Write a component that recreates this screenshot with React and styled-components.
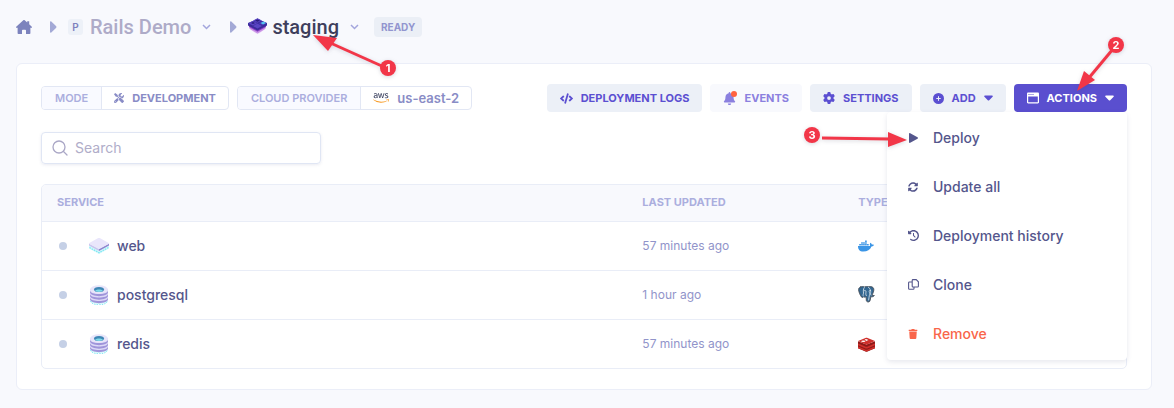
import React from "react";
import styled, { createGlobalStyle, css } from "styled-components";
import { FaAws, FaBell, FaCode, FaDocker, FaSyncAlt, FaTools, FaTrash } from "react-icons/fa";
import { FaCirclePlus, FaClockRotateLeft, FaGear } from "react-icons/fa6";

const GlobalStyle = createGlobalStyle`
  * { box-sizing: border-box; }
  body {
    margin: 0;
    min-height: 100vh;
    background: #f8f9fd;
    font-family: Inter, "Liberation Sans", sans-serif;
    font-size: 14px;
    line-height: 20px;
    color: #54568c;
  }
  button, input { font: inherit; margin: 0; }
`;

const Page = styled.main`
  padding: 12px 22px 18px 16px;
`;

const Breadcrumb = styled.nav`
  display: flex;
  align-items: center;
  height: 30px;
`;

const HomeLink = styled.a`
  display: flex;
  color: #7c83bd;
  margin-right: 17px;
  svg { display: block; }
`;

const Separator = styled.svg`
  display: block;
  width: 8px;
  height: 12px;
  margin-right: 11px;
  fill: #a3a9d6;
`;

const Initial = styled.span`
  display: grid;
  place-items: center;
  width: 15px;
  height: 16px;
  border-radius: 3px;
  background: #edf1f8;
  color: #7d81bd;
  font-size: 10px;
  line-height: 16px;
  font-weight: 600;
  margin-right: 7px;
`;

const Crumb = styled.a`
  font-family: Roboto, "Liberation Sans", sans-serif;
  font-size: 20px;
  line-height: 28px;
  font-weight: 500;
  text-decoration: none;
  color: ${(p) => (p.$current ? "#3e3f5c" : "#aeabc8")};
`;

const Environment = styled.div`
  display: flex;
  align-items: center;
  gap: 5px;
`;

const CrumbToggle = styled.button`
  display: flex;
  padding: 0;
  border: 0;
  background: none;
  margin: 0 ${(p) => p.$gap}px 0 11px;
  color: #a3a6dd;
`;

const Status = styled.span`
  padding: 0 7px;
  border-radius: 4px;
  background: #ebeff6;
  color: #9295cf;
  font-size: 10px;
  font-weight: 700;
  line-height: 20px;
`;

const Panel = styled.section`
  margin-top: 21px;
  padding: 20px 24px;
  border: 1px solid #ebeef8;
  border-radius: 6px;
  background: #fff;
`;

const Toolbar = styled.div`
  display: flex;
  align-items: center;
  justify-content: space-between;
`;

const Group = styled.div`
  display: flex;
  gap: 8px;
`;

const Tag = styled.div`
  display: flex;
  height: 24px;
  border: 1px solid #e2e7f4;
  border-radius: 4px;
  line-height: 22px;
  overflow: hidden;
`;

const TagLabel = styled.span`
  padding: 0 13px;
  background: #f9faff;
  border-right: 1px solid #e2e7f4;
  color: #abaede;
  font-size: 11px;
  font-weight: 600;
`;

const TagValue = styled.span`
  display: flex;
  align-items: center;
  gap: 8px;
  padding: 0 12px;
  color: #898cc6;
  font-size: ${(p) => (p.$large ? 13 : 11)}px;
  font-weight: ${(p) => (p.$large ? 600 : 700)};
`;

const AwsLogo = styled(FaAws)`
  path { fill: url(#aws-colors); }
`;

const buttonTone = {
  soft: css`background: #ecf0f7; color: #5b4fd1;`,
  faded: css`background: #f8f9fd; color: #8b80df;`,
  primary: css`background: #5a4fcf; color: #fff;`,
};

const Button = styled.button`
  display: flex;
  align-items: center;
  gap: 8px;
  height: 28px;
  padding: 0 13px;
  border: 0;
  border-radius: 4px;
  font-size: 11px;
  font-weight: 700;
  white-space: nowrap;
  ${(p) => buttonTone[p.$tone || "soft"]}
`;

const BellWrap = styled.span`
  display: flex;
  position: relative;
  &::after {
    content: "";
    position: absolute;
    top: -1px;
    right: -1px;
    width: 6px;
    height: 6px;
    border-radius: 50%;
    background: #ff6240;
  }
`;

const MenuAnchor = styled.div`
  position: relative;
`;

const Menu = styled.ul`
  position: absolute;
  z-index: 2;
  top: 100%;
  right: 0;
  width: 240px;
  margin: 0;
  padding: 1px 0 2px;
  list-style: none;
  background: #fff;
  border-radius: 4px;
  box-shadow: 0 2px 5px rgba(70, 75, 120, 0.13);
`;

const MenuItem = styled.button`
  display: flex;
  align-items: center;
  gap: 14px;
  width: 100%;
  height: 49px;
  padding: 0 20px;
  border: 0;
  background: none;
  font-weight: 500;
  text-align: left;
  color: ${(p) => (p.$danger ? "#f9654a" : "#54568c")};
`;

const MenuIcon = styled.span`
  display: grid;
  place-items: center;
  width: 12px;
`;

const SearchBox = styled.label`
  display: flex;
  align-items: center;
  gap: 6px;
  width: 280px;
  height: 32px;
  margin: 20px 0;
  padding: 0 10px;
  border: 1px solid #e0e6f4;
  border-radius: 4px;
  box-shadow: 0 1px 3px rgba(80, 90, 150, 0.12);
  color: #aaa7c6;
`;

const SearchInput = styled.input`
  flex: 1;
  min-width: 0;
  padding: 0;
  border: 0;
  outline: 0;
  background: none;
  color: #54568c;
  &::placeholder { color: #b0adc9; opacity: 1; }
`;

const TableFrame = styled.div`
  border: 1px solid #e9edf7;
  border-radius: 5px;
  overflow: hidden;
`;

const Table = styled.table`
  width: 100%;
  border-collapse: collapse;
  table-layout: fixed;
`;

const HeadCell = styled.th`
  width: ${(p) => p.$width || "auto"};
  height: 36px;
  padding: 0 15px 2px;
  background: #f8f9fd;
  color: #abaede;
  font-size: 11px;
  font-weight: 700;
  text-align: left;
`;

const Cell = styled.td`
  height: 49px;
  padding: 0 15px;
  border-top: 1px solid #e9edf7;
  font-size: ${(p) => (p.$muted ? 12 : 14)}px;
  font-weight: ${(p) => (p.$muted ? 400 : 500)};
  color: ${(p) => (p.$muted ? "#9194ca" : "#54568c")};
  svg { display: block; }
`;

const Service = styled.div`
  display: flex;
  align-items: center;
  gap: 8px;
`;

const Dot = styled.span`
  width: 8px;
  height: 8px;
  margin: 0 14px 0 2px;
  border-radius: 50%;
  background: #c5d0e6;
`;

const Annotations = styled.svg`
  position: absolute;
  z-index: 3;
  top: 0;
  left: ${(p) => (p.$fromRight ? "auto" : 0)};
  right: ${(p) => (p.$fromRight ? 0 : "auto")};
  pointer-events: none;
  filter: drop-shadow(0 1px 2px rgba(60, 60, 90, 0.2));
`;

const Arrow = ({ n, x, y, line, head }) => (
  <g fill="#f23648">
    <path d={line} stroke="#f23648" strokeWidth="3" />
    <path d={head} />
    <circle cx={x} cy={y} r="8" />
    <text x={x} y={y + 4} fill="#fff" fontSize="11" fontWeight="700" textAnchor="middle">{n}</text>
  </g>
);

const HomeIcon = () => (
  <svg width="16" height="16" viewBox="0 0 16 16" fill="currentColor">
    <path d="M7.300 1.300c.4-.4 1-.4 1.400 0l2.500 2.200V2.300h2v3l2.600 2.400c.5.500.2 1.100-.4 1.100h-1v5.500c0 .5-.3.800-.8.800H10v-3.600c0-.5-.3-.8-.8-.8H6.800c-.5 0-.8.300-.8.800v3.600H2.400c-.5 0-.8-.3-.8-.8V8.800h-1c-.6 0-.9-.6-.4-1.100z" />
  </svg>
);

const Chevron = () => (
  <svg width="9" height="6" viewBox="0 0 9 6" fill="none" stroke="currentColor" strokeWidth="1.5">
    <path d="M1 1l3.5 3.5L8 1" />
  </svg>
);

const Caret = () => (
  <svg width="9" height="6" viewBox="0 0 9 6" fill="currentColor">
    <path d="M1 .5h7c.8 0 1.100.8.6 1.300L5.200 5.200c-.4.4-1 .4-1.400 0L.4 1.800C-.1 1.300.200.5 1 .5z" />
  </svg>
);

const Triangle = () => (
  <path d="M1 1v10c0 .8.8 1 1.300.5l4.700-4.500c.6-.5.6-1.400 0-2L2.300.5C1.800 0 1 .2 1 1z" />
);

const PlayIcon = () => (
  <svg width="9" height="10" viewBox="0 0 9 10" fill="currentColor">
    <path d="M0 .8v8.400c0 .6.6 1 1.200.6l7.300-4.100c.6-.3.6-1.100 0-1.400L1.200.2C.6-.1 0 .2 0 .8z" />
  </svg>
);

const CopyIcon = () => (
  <svg width="11" height="11" viewBox="0 0 11 11" fill="none" stroke="currentColor" strokeWidth="1.100">
    <path d="M5 .6h3.200l2.200 2.200v4.400c0 .5-.3.800-.8.800H5c-.5 0-.8-.3-.8-.8V1.400c0-.5.3-.8.8-.8z" />
    <path d="M4 3H1.400c-.5 0-.8.3-.8.800v5.600c0 .5.300.8.800.8h3.800c.5 0 .8-.3.8-.8V8" />
  </svg>
);

const WindowIcon = () => (
  <svg width="12" height="12" viewBox="0 0 12 12">
    <path fill="currentColor" fillRule="evenodd" d="M1.200.5h9.600C11.500.5 12 1 12 1.700v8.600c0 .7-.5 1.200-1.200 1.200H1.200C.5 11.500 0 11 0 10.300V1.700C0 1 .5.5 1.200.5zM1.200 4.500v5.800h9.600V4.500z" />
    <path stroke="#5a4fcf" strokeDasharray="1 1" d="M1.500 2.500h5" />
  </svg>
);

const SearchIcon = () => (
  <svg width="17" height="17" viewBox="0 0 17 17" fill="none" stroke="currentColor" strokeWidth="1.300" strokeLinecap="round">
    <circle cx="7" cy="7" r="6" />
    <path d="M11.500 11.500l3.500 3.500" />
  </svg>
);

const EnvironmentIcon = () => (
  <svg width="19" height="18" viewBox="0 0 19 18">
    <path fill="#efd0f7" d="M2.500 10l7 6.500 7-6.500v1.500l-7 5-7-5z" />
    <path fill="#c993e6" d="M1.500 7.500h16v3.300l-8 5-8-5z" />
    <path fill="#8a3fc4" d="M1 7h17v2l-8.500 4.800L1 9z" />
    <path fill="#3b2b9b" d="M0 5l4.700-2L9.500.5l4.800 2.500L19 5v2.500L9.500 12.500 0 7.500z" />
    <path fill="#5945c4" d="M.3 5.200l4.500-2.200 4.400 2.200-4.400 2.400zM5 8l4.500-2.400L14 8l-4.500 2.500zM5.200 2.600L9.500.3l4.300 2.300-4.300 2.200z" />
    <path fill="#4a38b4" d="M10.200 5.200l4.200-2 4.400 2-4.400 2.300z" />
    <path fill="#55c4f2" d="M12.500 5l3-1.400L18 5l-3 1.500z" />
    <path fill="#2a1d7c" d="M7 2.500l2.500-1 2.500 1-2.500 1.200zM3 5l2-.9L7 5l-2 1z" />
  </svg>
);

const WebIcon = () => (
  <svg width="20" height="20" viewBox="0 0 20 20">
    <path fill="#d3f8fb" d="M0 9.500h20v3L10 18 0 12.500z" />
    <path fill="none" stroke="#7ee6f2" strokeWidth="1.200" strokeDasharray="1.500 1" d="M.5 11.500l9.500 5.200 9.500-5.200" />
    <path fill="#c9c4ee" d="M0 7.500L10 13v2L0 9.500z" />
    <path fill="#8f86cf" d="M20 7.500L10 13v2l10-5.500z" />
    <path fill="#e9e6fb" d="M.3 8c-.4-.3-.4-.8 0-1L8.800 2.300c.8-.4 1.600-.4 2.400 0L19.700 7c.4.200.4.700 0 1l-8.500 4.500c-.8.500-1.600.5-2.400 0z" />
  </svg>
);

const DatabaseIcon = () => (
  <svg width="20" height="20" viewBox="0 0 20 20">
    <path fill="#d3f8fb" d="M1 14.500c0 6 18 6 18 0z" />
    <path fill="none" stroke="#7ee6f2" strokeDasharray="1.500 1" d="M1.500 16c1 5 16 5 17 0" />
    {[11.5, 8, 4.5].map((y) => (
      <g key={y}>
        <path fill="#9f94da" d={`M1 ${y}v2.500c0 5.500 18 5.500 18 0V${y}z`} />
        <path fill="#dcd8f6" d={`M1 ${y}v1c0 4.800 18 4.800 18 0V${y}z`} />
      </g>
    ))}
    <ellipse cx="10" cy="4.500" rx="9" ry="4.300" fill="#e8e5fa" />
    <ellipse cx="10" cy="4.500" rx="5" ry="2.500" fill="#3f87b5" />
    <path fill="#7fdbe8" d="M6 5.800c2-1.700 6-1.700 8 0-2 1.500-6 1.500-8 0z" />
  </svg>
);

const PostgresIcon = () => (
  <svg width="17" height="17" viewBox="0 0 17 17" strokeLinecap="round" strokeLinejoin="round">
    <path fill="#336791" stroke="#464e58" strokeWidth=".9" d="M2.500 1C4 .3 5.500.5 6.500 1 8 .5 9 .5 10.200.8c1.500-.5 3.500-.4 4.800.7 1.800 1.800.2 5.500-1 7.500.7.5 1.500.5 2.300.5-.6 1.300-2.500 1.500-3.500 1.200-.4 1.300-.3 3.300-1 4.500-.8 1.200-3 1-3.400-.4-.3-1-.1-2.800-.3-4-1 .4-1.600.5-2.500 0-.6.8-1.500 1-2.100.2C2 9 .6 5.500.6 3.500.6 2.200 1.500 1.400 2.500 1z" />
    <path fill="none" stroke="#e6edf4" strokeWidth=".8" d="M6.300 1.500C5 3 5.400 5.500 5.500 7c0 1.300-1 2-.2 3M6 4.800c1-.6 2-.3 2 .8 0 1.400-.6 2.600.3 4M10.500 1.300c1.600 1.300 2.200 3 2.200 4.500 0 1-.5 2 .2 3.300M12.700 4.500c-1-.4-1.700 0-1.500 1 .2 1.200 1 2.300.2 3.800-.5 1.200-.3 3.200-.7 4.700" />
  </svg>
);

const RedisIcon = () => (
  <svg width="17" height="16" viewBox="0 0 16 15">
    <path fill="#8f1a18" d="M0 5l8 3 8-3v6.500l-7 3c-.7.300-1.300.3-2 0l-7-3z" />
    <path fill="none" stroke="#cf2f2b" strokeWidth="1.500" d="M0 7.800l7 2.900c.7.300 1.300.3 2 0l7-2.900M0 10.600l7 2.900c.7.300 1.300.3 2 0l7-2.900" />
    <path fill="#cf2f2b" d="M0 4.700l7-2.800c.7-.3 1.300-.3 2 0l7 2.800-7 3c-.7.300-1.300.3-2 0z" />
    <path fill="#fff" d="M6.500 2.800l1.200.3 1.400-.4-.4.8 1.200.4-1.500.2-.7.7-.5-.8-1.500-.2 1.200-.4z" />
    <ellipse cx="5" cy="4.800" rx="2" ry=".7" fill="#fff" />
  </svg>
);

const services = [
  { name: "web", updated: "57 minutes ago", icon: <WebIcon />, type: <FaDocker size={16} color="#3a95e6" /> },
  { name: "postgresql", updated: "1 hour ago", icon: <DatabaseIcon />, type: <PostgresIcon /> },
  { name: "redis", updated: "57 minutes ago", icon: <DatabaseIcon />, type: <RedisIcon /> },
];

const actions = [
  { label: "Deploy", icon: <PlayIcon /> },
  { label: "Update all", icon: <FaSyncAlt size={10} /> },
  { label: "Deployment history", icon: <FaClockRotateLeft size={11} /> },
  { label: "Clone", icon: <CopyIcon /> },
  { label: "Remove", icon: <FaTrash size={10} />, danger: true },
];

export default function App() {
  return (
    <>
      <GlobalStyle />
      <Page>
        <Breadcrumb aria-label="Breadcrumb">
          <HomeLink href="#home" aria-label="Home"><HomeIcon /></HomeLink>
          <Separator viewBox="0 0 8 12"><Triangle /></Separator>
          <Initial>P</Initial>
          <Crumb href="#project">Rails Demo</Crumb>
          <CrumbToggle $gap={18} aria-label="Switch project"><Chevron /></CrumbToggle>
          <Separator viewBox="0 0 8 12"><Triangle /></Separator>
          <Environment>
            <EnvironmentIcon />
            <Crumb href="#environment" $current>staging</Crumb>
          </Environment>
          <CrumbToggle $gap={15} aria-label="Switch environment"><Chevron /></CrumbToggle>
          <Status>READY</Status>
        </Breadcrumb>

        <Panel>
          <Toolbar>
            <Group>
              <Tag>
                <TagLabel>MODE</TagLabel>
                <TagValue><FaTools size={10} />DEVELOPMENT</TagValue>
              </Tag>
              <Tag>
                <TagLabel>CLOUD PROVIDER</TagLabel>
                <TagValue $large><AwsLogo size={16} />us-east-2</TagValue>
              </Tag>
            </Group>
            <Group>
              <Button><FaCode size={13} />DEPLOYMENT LOGS</Button>
              <Button $tone="faded"><BellWrap><FaBell size={13} /></BellWrap>EVENTS</Button>
              <Button><FaGear size={12} />SETTINGS</Button>
              <Button><FaCirclePlus size={11} />ADD<Caret /></Button>
              <MenuAnchor>
                <Button $tone="primary" aria-expanded="true"><WindowIcon />ACTIONS<Caret /></Button>
                <Menu>
                  {actions.map((a) => (
                    <li key={a.label}>
                      <MenuItem $danger={a.danger}><MenuIcon>{a.icon}</MenuIcon>{a.label}</MenuItem>
                    </li>
                  ))}
                </Menu>
              </MenuAnchor>
            </Group>
          </Toolbar>

          <SearchBox>
            <SearchIcon />
            <SearchInput type="search" placeholder="Search" aria-label="Search" />
          </SearchBox>

          <TableFrame>
            <Table>
              <thead>
                <tr>
                  <HeadCell $width="54%">SERVICE</HeadCell>
                  <HeadCell $width="216px">LAST UPDATED</HeadCell>
                  <HeadCell>TYPE</HeadCell>
                </tr>
              </thead>
              <tbody>
                {services.map((s) => (
                  <tr key={s.name}>
                    <Cell><Service><Dot />{s.icon}{s.name}</Service></Cell>
                    <Cell $muted>{s.updated}</Cell>
                    <Cell>{s.type}</Cell>
                  </tr>
                ))}
              </tbody>
            </Table>
          </TableFrame>
        </Panel>
      </Page>

      <Annotations width="420" height="90" aria-hidden="true">
        <defs>
          <linearGradient id="aws-colors" x1="0" y1="0" x2="0" y2="1">
            <stop offset="0.6" stopColor="#3c4260" />
            <stop offset="0.6" stopColor="#f7981f" />
          </linearGradient>
        </defs>
        <Arrow n="1" x={388} y={68} line="M384 67L326 41" head="M313 35l24 3-9 13z" />
      </Annotations>
      <Annotations $fromRight width="374" height="160" aria-hidden="true">
        <Arrow n="2" x={316} y={45} line="M313 49L288 79" head="M277 91l7-20 11 9z" />
        <Arrow n="3" x={12} y={135} line="M22 138l68 1" head="M107 140l-19 7v-15z" />
      </Annotations>
    </>
  );
}
